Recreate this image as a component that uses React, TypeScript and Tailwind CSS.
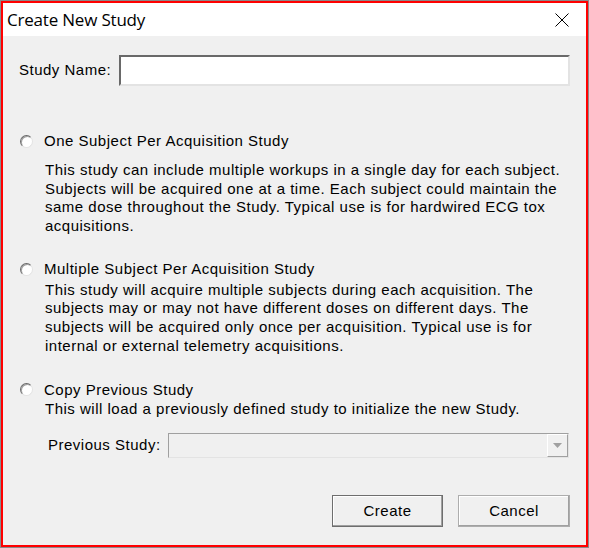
import { useState } from "react";

function Radio({ checked, onClick }: { checked: boolean; onClick: () => void }) {
  return (
    <button
      onClick={onClick}
      className="relative w-[13px] h-[13px] rounded-full bg-white shrink-0 border border-t-[#696969] border-l-[#696969] border-b-[#e3e3e3] border-r-[#e3e3e3] shadow-[inset_1px_1px_0_#a0a0a0]"
    >
      {checked && (
        <span className="absolute left-[3px] top-[3px] w-[5px] h-[5px] rounded-full bg-black" />
      )}
    </button>
  );
}

interface OptionProps {
  label: string;
  text: string;
  checked: boolean;
  gap: string;
  onSelect: () => void;
}

function StudyOption({ label, text, checked, gap, onSelect }: OptionProps) {
  return (
    <div>
      <label className="flex items-center h-[19px] ml-[2px] cursor-default" onClick={onSelect}>
        <Radio checked={checked} onClick={onSelect} />
        <span className="ml-[11px]">{label}</span>
      </label>
      <p className={`${gap} ml-[27px] pr-[2px] leading-[18.67px]`}>{text}</p>
    </div>
  );
}

export default function App() {
  const [mode, setMode] = useState<number>(-1);
  const [name, setName] = useState("");

  return (
    <div
      className="w-[589px] h-[548px] border border-[#8a8a8a] bg-[#f0f0f0] text-black text-[15px] tracking-[0.5px]"
      style={{ fontFamily: '"Liberation Sans", Arial, sans-serif' }}
    >
      <div className="h-full border-2 border-[#ff0000] flex flex-col">
        <div className="h-[33px] bg-white flex items-center justify-between pl-[4px] pr-[17px] shrink-0">
          <span className="text-[17px] font-['Open_Sans'] tracking-[-0.2px]">Create New Study</span>
          <svg width="14" height="14" viewBox="0 0 14 14">
            <path d="M0.5 0.5 L13.5 13.5 M13.5 0.5 L0.5 13.5" stroke="#000" strokeWidth="1" />
          </svg>
        </div>

        <div className="flex-1 px-[15px] pr-[16px]">
          <div className="flex items-center mt-[19px] h-[31px]">
            <span className="ml-[1px]">Study Name:</span>
            <input
              value={name}
              onChange={(e) => setName(e.target.value)}
              className="ml-auto w-[451px] h-[31px] bg-white outline-none px-1 border-2 border-t-[#696969] border-l-[#696969] border-b-[#e3e3e3] border-r-[#e3e3e3]"
            />
          </div>

          <div className="mt-[46px]">
            <StudyOption
              label="One Subject Per Acquisition Study"
              text="This study can include multiple workups in a single day for each subject. Subjects will be acquired one at a time. Each subject could maintain the same dose throughout the Study. Typical use is for hardwired ECG tox acquisitions."
              checked={mode === 0}
              gap="mt-[10px]"
              onSelect={() => setMode(0)}
            />
          </div>

          <div className="mt-[24px]">
            <StudyOption
              label="Multiple Subject Per Acquisition Study"
              text="This study will acquire multiple subjects during each acquisition. The subjects may or may not have different doses on different days. The subjects will be acquired only once per acquisition. Typical use is for internal or external telemetry acquisitions."
              checked={mode === 1}
              gap="mt-[2px]"
              onSelect={() => setMode(1)}
            />
          </div>

          <div className="mt-[25px]">
            <StudyOption
              label="Copy Previous Study"
              text="This will load a previously defined study to initialize the new Study."
              checked={mode === 2}
              gap="mt-[1px]"
              onSelect={() => setMode(2)}
            />
          </div>

          <div className="flex items-center mt-[14px] h-[25px]">
            <span className="ml-[30px]">Previous Study:</span>
            <div className="ml-auto w-[401px] h-[25px] mr-[1px] bg-[#f0f0f0] flex justify-end border border-t-[#a0a0a0] border-l-[#a0a0a0] border-b-[#e3e3e3] border-r-[#e3e3e3]">
              <div className="w-[21px] h-full flex items-center justify-center border border-t-[#fff] border-l-[#fff] border-b-[#a0a0a0] border-r-[#a0a0a0]">
                <svg width="9" height="5" viewBox="0 0 9 5">
                  <path d="M0 0 H9 L4.5 5 Z" fill="#a0a0a0" />
                </svg>
              </div>
            </div>
          </div>

          <div className="flex justify-end gap-[15px] mt-[37px]">
            <button className="w-[111px] h-[32px] bg-[#f0f0f0] border border-[#6e6e6e] shadow-[inset_-1px_-1px_0_#a0a0a0,inset_1px_1px_0_#fff]">
              Create
            </button>
            <button className="w-[112px] h-[32px] bg-[#f0f0f0] border border-[#adadad] shadow-[inset_-1px_-1px_0_#a0a0a0,inset_1px_1px_0_#fff]">
              Cancel
            </button>
          </div>
        </div>
      </div>
    </div>
  );
}
